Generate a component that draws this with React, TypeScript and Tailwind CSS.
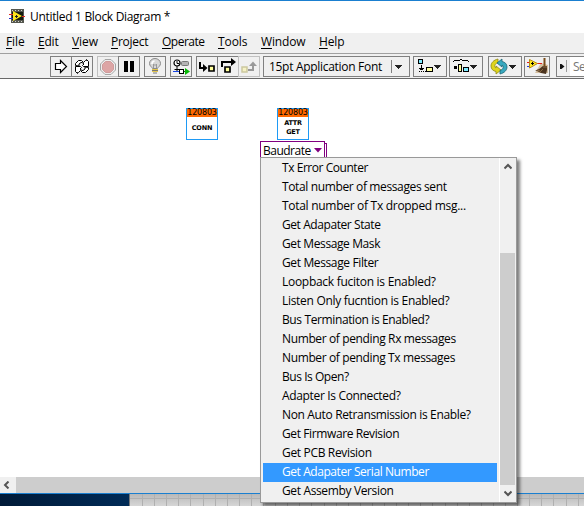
import type { ReactNode } from "react";

const items: [string, string][] = [
  ["Tx Error Counter", "tracking-[-0.45px]"],
  ["Total number of messages sent", "tracking-[-0.37px]"],
  ["Total number of Tx dropped msg...", "tracking-[-0.29px]"],
  ["Get Adapater State", "tracking-[-0.42px]"],
  ["Get Message Mask", "tracking-[-0.39px]"],
  ["Get Message Filter", "tracking-[-0.37px]"],
  ["Loopback fuciton is Enabled?", "tracking-[-0.28px]"],
  ["Listen Only fucntion is Enabled?", "tracking-[-0.3px]"],
  ["Bus Termination is Enabled?", "tracking-[-0.38px]"],
  ["Number of pending Rx messages", "tracking-[-0.37px]"],
  ["Number of pending Tx messages", "tracking-[-0.37px]"],
  ["Bus Is Open?", "tracking-[-0.45px]"],
  ["Adapter Is Connected?", "tracking-[-0.34px]"],
  ["Non Auto Retransmission is Enable?", "tracking-[-0.35px]"],
  ["Get Firmware Revision", "tracking-[-0.39px]"],
  ["Get PCB Revision", "tracking-[-0.33px]"],
  ["Get Adapater Serial Number", "tracking-[-0.43px]"],
  ["Get Assemby Version", "tracking-[-0.36px]"],
];

const menus: [string, string][] = [
  ["File", "w-[32px] tracking-[-0.1px]"],
  ["Edit", "w-[34px] tracking-[-0.2px]"],
  ["View", "w-[39px] tracking-[-0.1px]"],
  ["Project", "w-[51px] tracking-[-0.25px]"],
  ["Operate", "w-[56px] tracking-[-0.5px]"],
  ["Tools", "w-[43px] tracking-[-0.1px]"],
  ["Window", "w-[58px] tracking-[-0.15px]"],
  ["Help", "w-[40px] tracking-[-0.15px]"],
];

function Btn({ className = "", faded = false, children }: { className?: string; faded?: boolean; children: ReactNode }) {
  return (
    <div className={`flex h-[21px] shrink-0 items-center border ${faded ? "border-[#c0c0c0]" : "border-[#808080]"} ${className}`}>
      {children}
    </div>
  );
}

function Icon({ w = 20, children }: { w?: number; children: ReactNode }) {
  return (
    <svg width={w} height="19" viewBox={`0 0 ${w} 19`} className="block shrink-0" fill="none">
      {children}
    </svg>
  );
}

function Caret() {
  return <path d="M0 0h7v1h-1v1h-1v1h-1v1h-1v-1h-1v-1h-1v-1h-1z" fill="#222" shapeRendering="crispEdges" />;
}

function Node({ lines }: { lines: string[] }) {
  return (
    <div className="flex h-8 w-8 flex-col border border-[#1e9af5] bg-white text-black">
      <div className="flex h-2 items-center justify-center bg-[#ff6a00] font-['DejaVu_Sans',sans-serif] text-[8px] leading-[8px] tracking-[-0.2px]">
        120803
      </div>
      <div className="flex flex-1 flex-col items-center justify-center font-['DejaVu_Sans',sans-serif] text-[6.5px] font-bold leading-[9px] tracking-[-0.2px]">
        {lines.map((l) => (
          <span key={l}>{l}</span>
        ))}
      </div>
    </div>
  );
}

const LOOP = "M3.500 8.500v-2l3-3h3l2 2 2-2h1v-1l2 2v5h-5l-1-1 1.500-1.500-2-1.500h-1l-2 1.500v2z";
const SWIRL = "M9 2C4.500 3 2 6 2 9c0 3 2 5 5 5.500V17l5-4-5-4v2C5 10 5.500 6.500 9 5.500z";

export default function App() {
  return (
    <div className="relative flex h-[506px] w-[584px] flex-col overflow-hidden bg-white font-['Open_Sans','Noto_Sans',sans-serif] text-[12px] text-black">
      <div className="flex h-[33px] shrink-0 items-center border-t border-[#1a7fd0] pl-[9px]">
        <svg width="16" height="14" viewBox="0 0 16 14" shapeRendering="crispEdges" className="mt-[-3px] shrink-0">
          <path d="M2 0h13v14H2z" fill="#55574f" />
          <path d="M3 3h11v8H3z" fill="#141b10" />
          <path d="M3 1h1v1H3zM6 1h1v1H6zM9 1h1v1H9zM12 1h1v1h-1zM3 12h1v1H3zM6 12h1v1H6zM9 12h1v1H9zM12 12h1v1h-1z" fill="#d4d4cc" />
          <path d="M4 2l9 5-9 5z" fill="#fce51c" shapeRendering="auto" />
          <path d="M0 5h4v1H0zM13 7h3v1h-3z" fill="#e12b21" />
          <path d="M0 9h4v1H0z" fill="#2730c8" />
          <path d="M6 7h3v1H6zM7 6h1v3H7z" fill="#222" />
        </svg>
        <span className="ml-[5px] whitespace-pre text-[12px] leading-[16px] tracking-[-0.32px]">Untitled 1 Block Diagram *</span>
      </div>

      <div className="flex h-5 shrink-0 items-start bg-[#f0f0f0] pl-[6px]">
        {menus.map(([m, w]) => (
          <span key={m} className={`${w} shrink-0 whitespace-nowrap leading-[18px]`}>
            <span className="underline underline-offset-2">{m[0]}</span>
            {m.slice(1)}
          </span>
        ))}
      </div>

      <div className="flex h-[26px] shrink-0 items-start border-t border-b border-t-[#a0a0a0] border-b-[#696969] bg-[#f0f0f0] pt-[2px] pl-[50px]">
        <Btn className="w-[22px]">
          <Icon>
            <path d="M4.500 6.500h5v-3l6 6-6 6v-3h-5z" fill="#fff" stroke="#000" strokeWidth="1.200" />
          </Icon>
        </Btn>
        <Btn className="-ml-px w-[22px]">
          <Icon>
            <path d={LOOP} fill="#fff" stroke="#000" />
            <path d={LOOP} transform="rotate(180 10 9.500)" fill="#fff" stroke="#000" />
          </Icon>
        </Btn>
        <Btn faded className="ml-[4px] w-[22px]">
          <Icon>
            <path d="M7 2.500h6l4.500 4.500v6L13 17.500H7L2.500 13V7z" fill="#eee" stroke="#a5a5a5" />
            <path d="M7.500 4.500h5l3 3v5l-3 3h-5l-3-3v-5z" fill="#dda5a5" stroke="#cf9c9c" />
          </Icon>
        </Btn>
        <Btn className="-ml-px w-[22px]">
          <Icon>
            <path d="M5 4h4v11H5zM11 4h4v11h-4z" fill="#000" />
          </Icon>
        </Btn>
        <Btn className="ml-[4px] w-[22px]">
          <Icon>
            <path d="M7.500 11.500C7 10 4.500 9 4.500 6.500a5.500 5 0 0 1 11 0C15.500 9 13 10 12.500 11.500z" fill="#d8d8d8" stroke="#8a8a8a" />
            <path d="M7 7a3 3 0 0 1 2.500-3" stroke="#fff" strokeWidth="1.500" />
            <path d="M8.500 11V7l1.500 1.500L11.500 7v4" stroke="#999" />
            <path d="M7 12h6v3H7z" fill="#e3c64e" />
            <path d="M7 13.500h6M8 16h4" stroke="#777" />
          </Icon>
        </Btn>
        <Btn className="ml-[4px] w-[22px]">
          <Icon>
            <circle cx="6" cy="6" r="3" fill="#fff" stroke="#000" strokeWidth="1.200" />
            <path d="M6 4v2.500h2M6 9v5M3.500 12.500h5" stroke="#000" />
            <rect x="10.500" y="4.500" width="7" height="4" rx="1" fill="#b4b4b4" stroke="#777" />
            <path d="M2 14.500h7" stroke="#1947e8" />
            <rect x="8.500" y="12.500" width="4" height="4" fill="#fff" stroke="#000" />
            <path d="M13 14.500h2" stroke="#080" />
            <path d="M14 11l5 3.500-5 3.500z" fill="#08b908" />
          </Icon>
        </Btn>
        <Btn className="ml-[4px] w-[22px]">
          <Icon>
            <path d="M3 5v6h5" stroke="#000" strokeWidth="2" />
            <path d="M6 7l4.500 4L6 15z" fill="#000" />
            <path d="M12 9h5v5h-5z" fill="#ffff9b" stroke="#000" strokeWidth="1.700" />
          </Icon>
        </Btn>
        <Btn className="-ml-px w-[22px]">
          <Icon>
            <path d="M4 10V5h10" stroke="#000" strokeWidth="2" />
            <path d="M13 1l5 4-5 4z" fill="#000" />
            <path d="M7 10h5v5H7z" fill="#ffff9b" stroke="#000" strokeWidth="1.700" />
          </Icon>
        </Btn>
        <Btn faded className="-ml-px w-[22px]">
          <Icon>
            <path d="M3 10h5v5H3z" fill="#f5f2c5" stroke="#cbc89f" strokeWidth="1.500" />
            <path d="M9 13h5V8" stroke="#999" strokeWidth="2" />
            <path d="M10 9l4-4.500L18 9z" fill="#999" />
          </Icon>
        </Btn>
        <Btn className="ml-[3px] w-[147px] justify-between">
          <span className="pl-[5px] whitespace-nowrap leading-[18px] tracking-[-0.3px]">15pt Application Font</span>
          <Icon w={19}>
            <path d="M1.500 3v13" stroke="#808080" />
            <g transform="translate(5 8)"><Caret /></g>
          </Icon>
        </Btn>
        <Btn className="ml-[3px] w-[34px]">
          <Icon w={32}>
            <g shapeRendering="crispEdges">
              <path d="M4.500 2.500h4v4h-4z" fill="#7ceaff" stroke="#000" />
              <path d="M7.500 8v5M5 11.500h5M6 12.500h3" stroke="#000" />
              <path d="M5 14.500h8" stroke="#000" strokeDasharray="1 1" />
              <path d="M12.500 10.500h6v4h-6z" fill="#ffff9b" stroke="#000" />
              <g transform="translate(20 8)"><Caret /></g>
            </g>
          </Icon>
        </Btn>
        <Btn className="ml-[2px] w-[34px]">
          <Icon w={32}>
            <g shapeRendering="crispEdges">
              <path d="M3 4.500h1M4 3.500h6M10 2.500h2M12 3.500h6M18 4.500h1" stroke="#000" />
              <path d="M4 9h3v3H4z" fill="#000" />
              <path d="M8.500 7.500h3v7h-3z" fill="#ffff9b" stroke="#000" />
              <path d="M13.500 10.500h5v4h-5z" fill="#7ceaff" stroke="#000" />
              <g transform="translate(20 8)"><Caret /></g>
            </g>
          </Icon>
        </Btn>
        <Btn className="ml-[5px] w-[34px]">
          <Icon w={32}>
            <path d={SWIRL} fill="#dfd51c" stroke="#8f8916" strokeWidth=".8" />
            <path d={SWIRL} transform="rotate(180 10 9.500)" fill="#39a9bf" stroke="#1c6675" strokeWidth=".8" />
            <g transform="translate(20 8)"><Caret /></g>
          </Icon>
        </Btn>
        <Btn className="ml-[2px] w-[26px]">
          <Icon w={24}>
            <path d="M10 16h13V8l-7-2z" fill="#d4bfa0" />
            <path d="M2 5.500h4M12 6.500h5" stroke="#e21e1e" />
            <path d="M2 9.500h4" stroke="#2438db" />
            <path d="M4.500 2.500l8 4-8 4.500z" fill="#ffe91d" stroke="#b78a12" />
            <path d="M6 6.500h3M7.500 5v3" stroke="#000" />
            <path d="M18.500 1h2v9h-2z" fill="#7a4c1a" />
            <path d="M18 9h4v4l-1 4-5-1-6-3c4 0 5-2 8-4z" fill="#4c3520" />
            <path d="M12 13l3 1M15 15l3-3M18 10h4" stroke="#8a6a42" />
          </Icon>
        </Btn>
        <Btn className="ml-[6px] w-[28px] border-r-0">
          <Icon w={13}>
            <path d="M3 7h1.500L7.500 9.500 4.500 12H3z" fill="#111" />
            <path d="M9.500 3v12" stroke="#999" />
          </Icon>
          <span className="flex h-full flex-1 items-center bg-white pl-[3px] leading-[18px] tracking-[-0.6px] text-[#777]">Se</span>
        </Btn>
      </div>

      <div className="h-[398px] shrink-0 bg-white" />
      <div className="flex h-4 shrink-0 bg-[#cdcdcd]">
        <div className="flex h-full w-4 items-center justify-center bg-[#f0f0f0]">
          <svg width="7" height="8" viewBox="0 0 7 8" className="-ml-[3px]" fill="none">
            <path d="M5.500 .5L2 4l3.500 3.500" stroke="#555" strokeWidth="2" />
          </svg>
        </div>
      </div>
      <div className="flex h-[13px] shrink-0 border-t border-[#1a7fd0]">
        <div className="w-[129px] bg-gradient-to-r from-[#001a38] to-[#002b57]" />
        <div className="flex-1 border-l border-[#777] bg-[#d4d4d4]">
          <svg width="454" height="12" className="block" shapeRendering="crispEdges">
            <defs>
              <linearGradient id="shade" x1="0" x2="0" y1="0" y2="1">
                <stop offset="0" stopColor="#b8b8b8" />
                <stop offset="1" stopColor="#d6d6d6" />
              </linearGradient>
            </defs>
            <path d="M0 0h454v12H0z" fill="url(#shade)" />
            <path d="M0 4.500h454" stroke="#b0b0b0" />
            {Array.from({ length: 37 }, (_, i) => (
              <path key={i} d={`M${Math.round(12 + i * 12.1) + 0.5} 0v12`} stroke="#b0b0b0" />
            ))}
          </svg>
        </div>
      </div>

      <div className="absolute left-[186px] top-[108px]"><Node lines={["CONN"]} /></div>
      <div className="absolute left-[277px] top-[108px]"><Node lines={["ATTR", "GET"]} /></div>

      <div className="absolute left-[262px] top-[143px] h-[20px] w-[65px] border border-[#800080] bg-white" />
      <div className="absolute left-[260px] top-[141px] flex h-[20px] w-[65px] items-start border border-[#800080] bg-white pl-[2px]">
        <span className="w-[51px] leading-[18px] tracking-[-0.5px]">Baudrate</span>
        <svg width="8" height="5" className="mt-[6px] shrink-0" viewBox="0 0 8 5"><path d="M0 0h8L4 4.500z" fill="#800080" /></svg>
      </div>

      <div className="absolute left-[260px] top-[157px] flex h-[346px] w-[257px] border border-[#999] bg-[#f0f0f0] shadow-[3px_3px_3px_rgba(0,0,0,0.5)]">
        <div className="flex w-[238px] flex-col pt-px pl-[2px]">
          {items.map(([t, k], i) => (
            <div key={t} className={`h-[19px] w-[234px] shrink-0 pl-[19px] whitespace-nowrap leading-[18px] ${k} ${i === 16 ? "bg-[#3399ff] text-white" : ""}`}>
              {t}
            </div>
          ))}
        </div>
        <div className="flex w-[16px] flex-col border-l border-white">
          <div className="flex h-[95px] justify-center pt-[5px]">
            <svg width="8" height="7" viewBox="0 0 8 7" fill="none"><path d="M.5 5.500L4 2l3.500 3.500" stroke="#555" strokeWidth="2" /></svg>
          </div>
          <div className="h-[232px] bg-[#cdcdcd]" />
          <div className="flex justify-center pt-[5px]">
            <svg width="8" height="7" viewBox="0 0 8 7" fill="none"><path d="M.5 1.500L4 5l3.500-3.500" stroke="#555" strokeWidth="2" /></svg>
          </div>
        </div>
      </div>
    </div>
  );
}
